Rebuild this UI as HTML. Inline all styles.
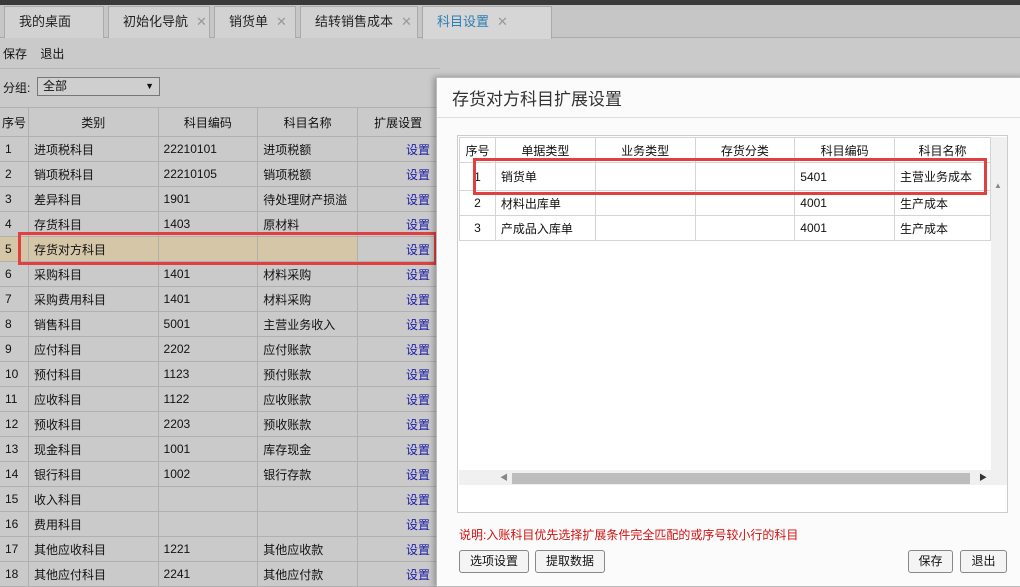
<!DOCTYPE html>
<html><head><meta charset="utf-8"><style>
*{margin:0;padding:0;box-sizing:border-box}
body{width:1020px;height:575px;overflow:hidden;background:#cacaca;font-family:"Liberation Sans","Noto Sans CJK SC",sans-serif;font-size:12px;color:#111;position:relative}
.a{position:absolute}
.tab{position:absolute;top:6px;height:32px;border:1px solid #aaa;border-bottom:none;background:#d2d2d2;font-size:13px;line-height:30px;padding-left:14px;color:#222}
.tab span{color:#999;margin-left:8px}
table{border-collapse:collapse;position:absolute}
td{border:1px solid #b0b0b0;height:25px;padding:0 5px;white-space:nowrap;overflow:hidden}
.lt td{font-size:12px}
.lt tr.h td{height:29px;text-align:center;font-size:12px}
.s{color:#1a1aa8;text-align:right;padding-right:8px}
.btn{position:absolute;top:550px;height:23px;border:1px solid #888;border-radius:3px;background:#f4f4f4;font-size:12px;line-height:21px;text-align:center}
.dt td{border:1px solid #d4d4d4;font-size:12px}
.dt td:first-child{text-align:center;padding:0}
</style></head><body>
<div class="a" style="left:0;top:0;width:1020px;height:5px;background:#3a3a3a"></div>
<div class="a" style="left:0;top:5px;width:1020px;height:33px;background:#c6c6c6;border-bottom:1px solid #aaa"></div>
<div class="tab" style="left:4px;width:100px">我的桌面</div>
<div class="tab" style="left:108px;width:102px">初始化导航<span>✕</span></div>
<div class="tab" style="left:214px;width:82px">销货单<span>✕</span></div>
<div class="tab" style="left:300px;width:118px">结转销售成本<span>✕</span></div>
<div class="tab" style="left:422px;width:130px;background:#d6d6d6;color:#2a7fb0;height:33px">科目设置<span>✕</span></div>
<div class="a" style="left:3px;top:45px;font-size:12px">保存&nbsp;&nbsp;&nbsp;&nbsp;退出</div>
<div class="a" style="left:0;top:68px;width:440px;height:1px;background:#b5b5b5"></div>
<div class="a" style="left:3px;top:79px;font-size:12px">分组:</div>
<div class="a" style="left:37px;top:77px;width:123px;height:19px;border:1px solid #777;background:#cfcfcf;font-size:12px;line-height:17px;padding-left:5px">全部<span style="position:absolute;right:5px;font-size:9px">▼</span></div>
<table class="lt" style="left:-1px;top:107px;width:440px">
<colgroup><col style="width:29px"><col style="width:130px"><col style="width:100px"><col style="width:100px"><col style="width:81px"></colgroup>
<tr class="h"><td style="padding:0">序号</td><td>类别</td><td>科目编码</td><td>科目名称</td><td>扩展设置</td></tr>
<tr><td>1</td><td>进项税科目</td><td>22210101</td><td>进项税额</td><td class="s">设置</td></tr>
<tr><td>2</td><td>销项税科目</td><td>22210105</td><td>销项税额</td><td class="s">设置</td></tr>
<tr><td>3</td><td>差异科目</td><td>1901</td><td>待处理财产损溢</td><td class="s">设置</td></tr>
<tr><td>4</td><td>存货科目</td><td>1403</td><td>原材料</td><td class="s">设置</td></tr>
<tr style="background:#d6c6a8"><td>5</td><td>存货对方科目</td><td></td><td></td><td class="s" style="background:#cacaca">设置</td></tr>
<tr><td>6</td><td>采购科目</td><td>1401</td><td>材料采购</td><td class="s">设置</td></tr>
<tr><td>7</td><td>采购费用科目</td><td>1401</td><td>材料采购</td><td class="s">设置</td></tr>
<tr><td>8</td><td>销售科目</td><td>5001</td><td>主营业务收入</td><td class="s">设置</td></tr>
<tr><td>9</td><td>应付科目</td><td>2202</td><td>应付账款</td><td class="s">设置</td></tr>
<tr><td>10</td><td>预付科目</td><td>1123</td><td>预付账款</td><td class="s">设置</td></tr>
<tr><td>11</td><td>应收科目</td><td>1122</td><td>应收账款</td><td class="s">设置</td></tr>
<tr><td>12</td><td>预收科目</td><td>2203</td><td>预收账款</td><td class="s">设置</td></tr>
<tr><td>13</td><td>现金科目</td><td>1001</td><td>库存现金</td><td class="s">设置</td></tr>
<tr><td>14</td><td>银行科目</td><td>1002</td><td>银行存款</td><td class="s">设置</td></tr>
<tr><td>15</td><td>收入科目</td><td></td><td></td><td class="s">设置</td></tr>
<tr><td>16</td><td>费用科目</td><td></td><td></td><td class="s">设置</td></tr>
<tr><td>17</td><td>其他应收科目</td><td>1221</td><td>其他应收款</td><td class="s">设置</td></tr>
<tr><td>18</td><td>其他应付科目</td><td>2241</td><td>其他应付款</td><td class="s">设置</td></tr>
</table>
<div class="a" style="left:18px;top:232px;width:419px;height:33px;border:3px solid #e04040"></div>
<!-- dialog -->
<div class="a" style="left:436px;top:77px;width:590px;height:510px;background:#fbfbfb;border:1px solid #bbb;box-shadow:-2px 0 6px rgba(0,0,0,.3)"></div>
<div class="a" style="left:452px;top:85px;font-size:17px;color:#333">存货对方科目扩展设置</div>
<div class="a" style="left:437px;top:117px;width:583px;height:1px;background:#ddd"></div>
<div class="a" style="left:457px;top:135px;width:551px;height:378px;border:1px solid #ccc;background:#fff"></div>
<table class="dt" style="left:459px;top:137px;width:532px">
<colgroup><col style="width:36px"><col style="width:100px"><col style="width:100px"><col style="width:100px"><col style="width:100px"><col style="width:96px"></colgroup>
<tr style="text-align:center"><td style="height:24px;padding:0">序号</td><td>单据类型</td><td>业务类型</td><td>存货分类</td><td>科目编码</td><td>科目名称</td></tr>
<tr><td style="height:28px">1</td><td>销货单</td><td></td><td></td><td>5401</td><td>主营业务成本</td></tr>
<tr><td>2</td><td>材料出库单</td><td></td><td></td><td>4001</td><td>生产成本</td></tr>
<tr><td>3</td><td>产成品入库单</td><td></td><td></td><td>4001</td><td>生产成本</td></tr>
</table>
<div class="a" style="left:991px;top:137px;width:16px;height:348px;background:#f0f0f0"></div>
<div class="a" style="left:994px;top:181px;font-size:8px;color:#888">▲</div>
<div class="a" style="left:459px;top:470px;width:532px;height:15px;background:#f0f0f0"></div>
<div class="a" style="left:512px;top:473px;width:458px;height:11px;background:#bdbdbd"></div>
<div class="a" style="left:500px;top:472px;font-size:8px;color:#888">◀</div>
<div class="a" style="left:979px;top:472px;font-size:8px;color:#333">▶</div>
<div class="a" style="left:473px;top:158px;width:514px;height:37px;border:3px solid #e04040"></div>
<div class="a" style="left:459px;top:526px;color:#d01010;font-size:12px">说明:入账科目优先选择扩展条件完全匹配的或序号较小行的科目</div>
<div class="btn" style="left:459px;width:70px">选项设置</div>
<div class="btn" style="left:535px;width:70px">提取数据</div>
<div class="btn" style="left:908px;width:45px">保存</div>
<div class="btn" style="left:960px;width:47px">退出</div>
</body></html>
